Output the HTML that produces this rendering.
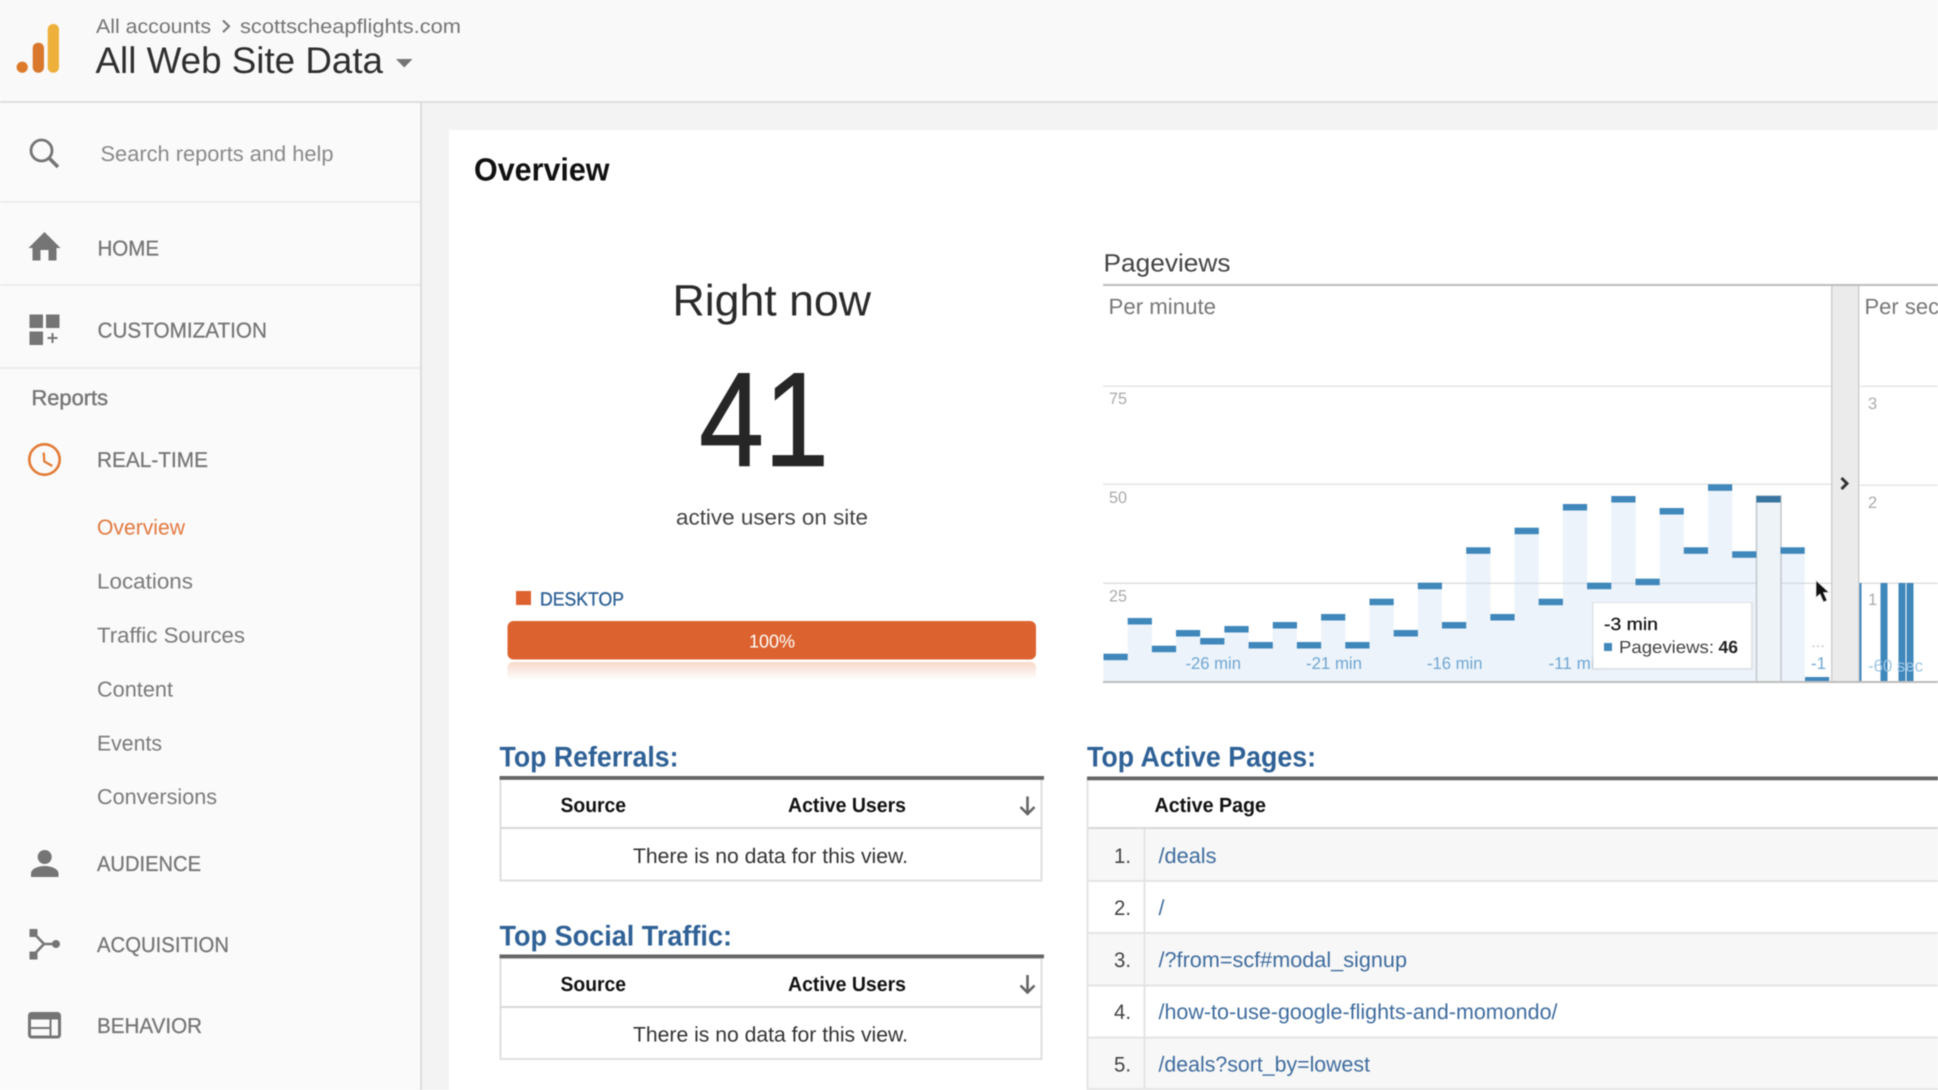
<!DOCTYPE html>
<html lang="en">
<head>
<meta charset="utf-8">
<title>Analytics Real-Time Overview</title>
<style>
html,body{margin:0;padding:0;background:#fff;width:1938px;height:1090px;overflow:hidden}
svg{display:block;filter:blur(.4px)}
text{font-family:"Liberation Sans",Arial,sans-serif;text-rendering:geometricPrecision}
.nav{font-size:21.5px;fill:#757575;stroke:#757575;stroke-width:.25px}
.sub{font-size:21.5px;fill:#7a7a7a}
.h{font-size:28.5px;font-weight:bold;fill:#2f6196}
.th{font-size:20.5px;font-weight:bold;fill:#111}
.nd{font-size:21px;fill:#333}
.num{font-size:21px;fill:#444}
.lk{font-size:21.5px;fill:#3f6c9e}
.yl{font-size:16.5px;fill:#aaa}
.xl{font-size:17px;fill:#6fa6d2}
</style>
</head>
<body>
<svg xmlns="http://www.w3.org/2000/svg" width="1938" height="1090" viewBox="0 0 1938 1090">
<!-- backgrounds -->
<rect width="1938" height="1090" fill="#fff"/>
<rect x="0" y="0" width="1938" height="101" fill="#f9f9f9"/>
<rect x="0" y="101" width="1938" height="2" fill="#dedede"/>
<rect x="0" y="103" width="420" height="987" fill="#fafafa"/>
<rect x="420" y="103" width="2" height="987" fill="#dcdcdc"/>
<rect x="422" y="103" width="1516" height="27" fill="#f3f3f3"/>
<rect x="422" y="103" width="27" height="987" fill="#f3f3f3"/>

<!-- header -->
<circle cx="22.200" cy="67.200" r="5.600" fill="#dd7a2a"/>
<rect x="32.700" y="42.700" width="11.300" height="30" rx="5.500" fill="#d9782d"/>
<rect x="47.700" y="24" width="11.300" height="48.700" rx="5.500" fill="#edb03a"/>
<text x="96" y="33" font-size="20" fill="#757575" textLength="115" lengthAdjust="spacingAndGlyphs">All accounts</text>
<path d="M223 20.500l6 5.800-6 5.800" fill="none" stroke="#757575" stroke-width="2"/>
<text x="240" y="33" font-size="20" fill="#757575" textLength="221" lengthAdjust="spacingAndGlyphs">scottscheapflights.com</text>
<text x="95.500" y="73" font-size="37" fill="#2e2e2e" textLength="287.500" lengthAdjust="spacingAndGlyphs">All Web Site Data</text>
<path d="M396 59h16.500l-8.250 8.500z" fill="#757575"/>

<!-- sidebar search -->
<circle cx="41.500" cy="150.500" r="10.500" fill="none" stroke="#757575" stroke-width="2.800"/>
<path d="M49 158l9 9" stroke="#757575" stroke-width="3.600" fill="none"/>
<text x="100.500" y="161" font-size="21.500" fill="#8a8a8a" textLength="233" lengthAdjust="spacingAndGlyphs">Search reports and help</text>
<rect x="0" y="201" width="420" height="2" fill="#ececec"/>

<!-- home -->
<path d="M44.500 232L28.500 248H32.500V260.500H40.500V250H48.500V260.500H56.500V248H60.500Z" fill="#757575"/>
<text class="nav" x="97.500" y="255.400" textLength="61.500" lengthAdjust="spacingAndGlyphs">HOME</text>
<rect x="0" y="284" width="420" height="2" fill="#ececec"/>

<!-- customization -->
<g fill="#757575">
<rect x="29.500" y="314.500" width="13.500" height="13.500"/>
<rect x="46" y="314.500" width="13.500" height="13.500"/>
<rect x="29.500" y="331.500" width="13.500" height="13.500"/>
<rect x="47.500" y="337" width="10" height="2"/>
<rect x="51.500" y="333" width="2" height="10"/>
</g>
<text class="nav" x="97.500" y="337.700" textLength="169.500" lengthAdjust="spacingAndGlyphs">CUSTOMIZATION</text>
<rect x="0" y="367" width="420" height="2" fill="#ececec"/>

<!-- reports -->
<text x="31.500" y="405" font-size="21.500" fill="#757575" stroke="#757575" stroke-width=".4" textLength="76.500" lengthAdjust="spacingAndGlyphs">Reports</text>
<circle cx="44.500" cy="459.500" r="15.200" fill="none" stroke="#e37a33" stroke-width="2.600"/>
<path d="M43.700 452.500L44.300 461.500L52.300 466" fill="none" stroke="#e37a33" stroke-width="2.200"/>
<text class="nav" x="97" y="467" textLength="111" lengthAdjust="spacingAndGlyphs">REAL-TIME</text>
<text x="97" y="534.400" font-size="21.500" fill="#e2793f" textLength="88" lengthAdjust="spacingAndGlyphs">Overview</text>
<text class="sub" x="97" y="588.400" textLength="96" lengthAdjust="spacingAndGlyphs">Locations</text>
<text class="sub" x="97" y="642.400" textLength="148" lengthAdjust="spacingAndGlyphs">Traffic Sources</text>
<text class="sub" x="97" y="696.400" textLength="76" lengthAdjust="spacingAndGlyphs">Content</text>
<text class="sub" x="97" y="750.400" textLength="65" lengthAdjust="spacingAndGlyphs">Events</text>
<text class="sub" x="97" y="804" textLength="120" lengthAdjust="spacingAndGlyphs">Conversions</text>

<!-- audience -->
<circle cx="44.700" cy="857" r="7" fill="#757575"/>
<path d="M31 877v-3.500c0-5 8-7.500 13.700-7.500s13.800 2.500 13.800 7.500v3.500z" fill="#757575"/>
<text class="nav" x="97" y="871" textLength="104" lengthAdjust="spacingAndGlyphs">AUDIENCE</text>

<!-- acquisition -->
<g fill="#757575">
<rect x="29.500" y="929" width="8" height="8"/>
<rect x="29.500" y="951.500" width="8" height="8"/>
<circle cx="56" cy="944" r="4"/>
</g>
<path d="M33.500 933L44 944L33.500 955M44 944H56" fill="none" stroke="#757575" stroke-width="2.600"/>
<text class="nav" x="97" y="952" textLength="132" lengthAdjust="spacingAndGlyphs">ACQUISITION</text>

<!-- behavior -->
<rect x="29.500" y="1013.500" width="30" height="23.500" rx="2" fill="none" stroke="#757575" stroke-width="3"/>
<rect x="29" y="1013" width="31" height="6.500" fill="#757575"/>
<path d="M30 1028H50M50.500 1019V1036" stroke="#757575" stroke-width="2" fill="none"/>
<text class="nav" x="97" y="1033" textLength="105" lengthAdjust="spacingAndGlyphs">BEHAVIOR</text>

<!-- main -->
<text x="474" y="180.700" font-size="32" font-weight="bold" fill="#111" textLength="135.500" lengthAdjust="spacingAndGlyphs">Overview</text>
<text x="672.500" y="315.500" font-size="44" fill="#2a2a2a" textLength="198.500" lengthAdjust="spacingAndGlyphs">Right now</text>
<text x="699" y="465.700" font-size="134" fill="#262626" stroke="#262626" stroke-width="1" textLength="130" lengthAdjust="spacingAndGlyphs">41</text>
<text x="676" y="524.500" font-size="21.500" fill="#444" textLength="192" lengthAdjust="spacingAndGlyphs">active users on site</text>

<!-- desktop bar -->
<rect x="516" y="591" width="15" height="14" fill="#dd6230"/>
<text x="540" y="605.300" font-size="19" fill="#2f6196" stroke="#2f6196" stroke-width=".35" textLength="84" lengthAdjust="spacingAndGlyphs">DESKTOP</text>
<defs>
<linearGradient id="refl" x1="0" y1="0" x2="0" y2="1">
<stop offset="0" stop-color="#f7d9ca"/>
<stop offset="1" stop-color="#ffffff"/>
</linearGradient>
</defs>
<rect x="507.500" y="662" width="528.500" height="18" rx="5" fill="url(#refl)"/>
<rect x="507.500" y="621" width="528.500" height="38.500" rx="6" fill="#dc6330"/>
<text x="749" y="647.500" font-size="18.500" fill="#fff" textLength="46" lengthAdjust="spacingAndGlyphs">100%</text>

<!-- top referrals -->
<text class="h" x="499.500" y="766.500" textLength="179" lengthAdjust="spacingAndGlyphs">Top Referrals:</text>
<rect x="500.500" y="779" width="541" height="101.500" fill="#fff" stroke="#dfdfdf" stroke-width="2"/>
<rect x="499.500" y="776" width="544.500" height="3.800" fill="#666"/>
<rect x="500" y="827" width="542" height="2" fill="#d8d8d8"/>
<text class="th" x="560.500" y="812" textLength="65.500" lengthAdjust="spacingAndGlyphs">Source</text>
<text class="th" x="788" y="812" textLength="118" lengthAdjust="spacingAndGlyphs">Active Users</text>
<path d="M1027.500 796.500V813.500M1020.500 807L1027.500 814L1034.500 807" fill="none" stroke="#666" stroke-width="2.600"/>
<text class="nd" x="633" y="863" textLength="275" lengthAdjust="spacingAndGlyphs">There is no data for this view.</text>

<!-- top social -->
<text class="h" x="499.500" y="945.500" textLength="232.500" lengthAdjust="spacingAndGlyphs">Top Social Traffic:</text>
<rect x="500.500" y="958" width="541" height="101" fill="#fff" stroke="#dfdfdf" stroke-width="2"/>
<rect x="499.500" y="954.500" width="544.500" height="3.800" fill="#666"/>
<rect x="500" y="1006" width="542" height="2" fill="#d8d8d8"/>
<text class="th" x="560.500" y="991" textLength="65.500" lengthAdjust="spacingAndGlyphs">Source</text>
<text class="th" x="788" y="991" textLength="118" lengthAdjust="spacingAndGlyphs">Active Users</text>
<path d="M1027.500 975V992M1020.500 985.500L1027.500 992.500L1034.500 985.500" fill="none" stroke="#666" stroke-width="2.600"/>
<text class="nd" x="633" y="1041.500" textLength="275" lengthAdjust="spacingAndGlyphs">There is no data for this view.</text>

<!-- top active pages -->
<text class="h" x="1087" y="766.500" textLength="229" lengthAdjust="spacingAndGlyphs">Top Active Pages:</text>
<rect x="1087" y="829" width="851" height="51" fill="#f7f7f7"/>
<rect x="1087" y="933" width="851" height="52" fill="#f7f7f7"/>
<rect x="1087" y="1038" width="851" height="52" fill="#f7f7f7"/>
<g fill="#e4e4e4">
<rect x="1087" y="827" width="851" height="2" fill="#d8d8d8"/>
<rect x="1087" y="880" width="851" height="2"/>
<rect x="1087" y="932" width="851" height="2"/>
<rect x="1087" y="984.500" width="851" height="2"/>
<rect x="1087" y="1036.500" width="851" height="2"/>
<rect x="1087" y="1088" width="851" height="2"/>
<rect x="1086.500" y="780" width="2" height="310"/>
<rect x="1143.500" y="829" width="2" height="261"/>
</g>
<rect x="1087" y="776.500" width="851" height="3.800" fill="#666"/>
<text class="th" x="1154.500" y="812" textLength="111.500" lengthAdjust="spacingAndGlyphs">Active Page</text>
<text class="num" x="1114" y="863" textLength="17" lengthAdjust="spacingAndGlyphs">1.</text>
<text class="num" x="1114" y="915" textLength="17" lengthAdjust="spacingAndGlyphs">2.</text>
<text class="num" x="1114" y="967" textLength="17" lengthAdjust="spacingAndGlyphs">3.</text>
<text class="num" x="1114" y="1019" textLength="17" lengthAdjust="spacingAndGlyphs">4.</text>
<text class="num" x="1114" y="1071.500" textLength="17" lengthAdjust="spacingAndGlyphs">5.</text>
<text class="lk" x="1158.500" y="863" textLength="58" lengthAdjust="spacingAndGlyphs">/deals</text>
<text class="lk" x="1158.500" y="915">/</text>
<text class="lk" x="1158.500" y="967" textLength="248.500" lengthAdjust="spacingAndGlyphs">/?from=scf#modal_signup</text>
<text class="lk" x="1158.500" y="1019" textLength="399" lengthAdjust="spacingAndGlyphs">/how-to-use-google-flights-and-momondo/</text>
<text class="lk" x="1158.500" y="1071.500" textLength="211.500" lengthAdjust="spacingAndGlyphs">/deals?sort_by=lowest</text>

<!-- chart -->
<text x="1103.500" y="271.700" font-size="25" fill="#444" textLength="127" lengthAdjust="spacingAndGlyphs">Pageviews</text>
<rect x="1103" y="284" width="835" height="2" fill="#bdbdbd"/>
<text x="1108.500" y="314" font-size="22" fill="#777" textLength="107.500" lengthAdjust="spacingAndGlyphs">Per minute</text>
<text x="1864.500" y="314" font-size="22" fill="#777">Per second</text>

<!-- gridlines -->
<g fill="#e6e6e6">
<rect x="1103" y="385.500" width="728" height="1.500"/>
<rect x="1103" y="483.500" width="728" height="1.500"/>
<rect x="1103" y="582.500" width="728" height="1.500" fill="#dcdfe2"/>
<rect x="1860" y="385.500" width="78" height="1.500"/>
<rect x="1860" y="484.500" width="78" height="1.500"/>
<rect x="1860" y="582.500" width="78" height="1.500" fill="#dcdfe2"/>
</g>

<!-- area fill -->
<path fill="#c9dff0" fill-opacity=".36" d="M1103.500 682V653.700H1127.700V618H1151.900V645.700H1176V630H1200.200V638H1224.400V626H1248.600V642H1272.800V622H1296.900V642H1321.100V614H1345.300V642H1369.500V598.700H1393.700V630H1417.800V582.700H1442V622H1466.200V547.300H1490.400V614H1514.600V527.700H1538.700V598.700H1562.900V504H1587.100V582.700H1611.300V496H1635.500V578.700H1659.600V508H1683.800V547.300H1708V484.300H1732.200V551.300H1756.400V496H1780.500V547.300H1804.700V682Z"/>
<rect x="1756.500" y="496" width="24.500" height="186" fill="#edf3f7" stroke="#c2c8cb" stroke-width="1.500"/>

<!-- bars -->
<g fill="#4087bb">
<rect x="1103.500" y="653.700" width="24.200" height="6.500"/>
<rect x="1127.700" y="618" width="24.200" height="6.500"/>
<rect x="1151.900" y="645.700" width="24.200" height="6.500"/>
<rect x="1176" y="630" width="24.200" height="6.500"/>
<rect x="1200.200" y="638" width="24.200" height="6.500"/>
<rect x="1224.400" y="626" width="24.200" height="6.500"/>
<rect x="1248.600" y="642" width="24.200" height="6.500"/>
<rect x="1272.800" y="622" width="24.200" height="6.500"/>
<rect x="1296.900" y="642" width="24.200" height="6.500"/>
<rect x="1321.100" y="614" width="24.200" height="6.500"/>
<rect x="1345.300" y="642" width="24.200" height="6.500"/>
<rect x="1369.500" y="598.700" width="24.200" height="6.500"/>
<rect x="1393.700" y="630" width="24.200" height="6.500"/>
<rect x="1417.800" y="582.700" width="24.200" height="6.500"/>
<rect x="1442" y="622" width="24.200" height="6.500"/>
<rect x="1466.200" y="547.300" width="24.200" height="6.500"/>
<rect x="1490.400" y="614" width="24.200" height="6.500"/>
<rect x="1514.600" y="527.700" width="24.200" height="6.500"/>
<rect x="1538.700" y="598.700" width="24.200" height="6.500"/>
<rect x="1562.900" y="504" width="24.200" height="6.500"/>
<rect x="1587.100" y="582.700" width="24.200" height="6.500"/>
<rect x="1611.300" y="496" width="24.200" height="6.500"/>
<rect x="1635.500" y="578.700" width="24.200" height="6.500"/>
<rect x="1659.600" y="508" width="24.200" height="6.500"/>
<rect x="1683.800" y="547.300" width="24.200" height="6.500"/>
<rect x="1708" y="484.300" width="24.200" height="6.500"/>
<rect x="1732.200" y="551.300" width="24.200" height="6.500"/>
<rect x="1756.400" y="496" width="24.200" height="6.500" fill="#37749f"/>
<rect x="1780.500" y="547.300" width="24.200" height="6.500"/>
<rect x="1805" y="677" width="24.200" height="5"/>
</g>

<!-- axis labels -->
<text class="yl" x="1109" y="404" textLength="18" lengthAdjust="spacingAndGlyphs">75</text>
<text class="yl" x="1109" y="503" textLength="18" lengthAdjust="spacingAndGlyphs">50</text>
<text class="yl" x="1109" y="601.500" textLength="18" lengthAdjust="spacingAndGlyphs">25</text>
<text class="xl" x="1185.500" y="669" textLength="55.500" lengthAdjust="spacingAndGlyphs">-26 min</text>
<text class="xl" x="1306" y="669" textLength="56" lengthAdjust="spacingAndGlyphs">-21 min</text>
<text class="xl" x="1427" y="669" textLength="55.500" lengthAdjust="spacingAndGlyphs">-16 min</text>
<text class="xl" x="1548.500" y="669" textLength="55.500" lengthAdjust="spacingAndGlyphs">-11 min</text>
<text class="xl" x="1811" y="669">-1</text>
<text x="1811" y="647" font-size="14" fill="#bbb" textLength="14" lengthAdjust="spacingAndGlyphs">...</text>

<!-- separator -->
<rect x="1831.500" y="286" width="27.500" height="396" fill="#ebebeb"/>
<rect x="1831" y="286" width="1.500" height="396" fill="#cfcfcf"/>
<rect x="1858" y="286" width="1.500" height="396" fill="#cfcfcf"/>
<path d="M1841.500 478L1847 483.500L1841.500 489" fill="none" stroke="#333" stroke-width="3"/>

<!-- per second -->
<g fill="#4087bb">
<rect x="1859.500" y="583" width="2" height="99"/>
<rect x="1880.500" y="583" width="7" height="99"/>
<rect x="1898.500" y="583" width="7" height="99"/>
<rect x="1906.500" y="583" width="7" height="99"/>
</g>
<text class="yl" x="1868" y="409">3</text>
<text class="yl" x="1868" y="508">2</text>
<text class="yl" x="1868" y="605">1</text>
<text x="1868" y="671.500" font-size="17" fill="#9cc5e4" textLength="55" lengthAdjust="spacingAndGlyphs">-60 sec</text>

<!-- baseline -->
<rect x="1103" y="681" width="835" height="2" fill="#bdbdbd"/>

<!-- tooltip -->
<rect x="1592" y="602" width="161" height="68" fill="#dde1e3" opacity=".85"/>
<rect x="1593.500" y="603" width="157.500" height="65" fill="#fff"/>
<text x="1604" y="630" font-size="17.500" fill="#111" stroke="#111" stroke-width=".25" textLength="54" lengthAdjust="spacingAndGlyphs">-3 min</text>
<rect x="1604" y="643" width="8" height="8" fill="#4087bb"/>
<text x="1619" y="653" font-size="17.500" fill="#444" textLength="95" lengthAdjust="spacingAndGlyphs">Pageviews:</text>
<text x="1718.500" y="653" font-size="17.500" font-weight="bold" fill="#222" textLength="19.500" lengthAdjust="spacingAndGlyphs">46</text>

<!-- cursor -->
<path d="M1816 580.500V597.500L1820 594L1823.500 602L1827 600.500L1823.500 592.500L1829 592.500Z" fill="#111" stroke="#ddd" stroke-width=".8"/>
</svg>
</body>
</html>
